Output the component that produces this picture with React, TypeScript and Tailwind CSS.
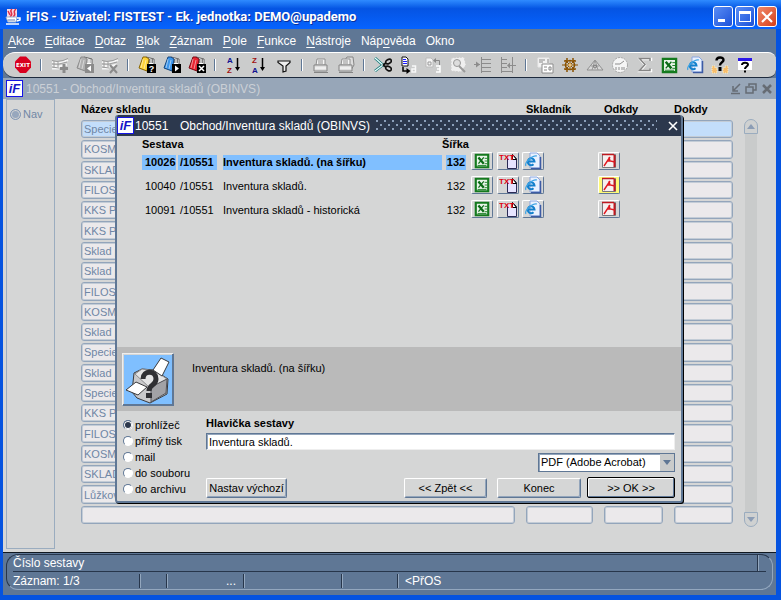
import type { ReactNode } from "react";

const FONT = "font-['Liberation_Sans',Arial,sans-serif]";

function Svg({ size = 18, children }: { size?: number; children: ReactNode }) {
  return (
    <svg width={size} height={size} viewBox="0 0 18 18" fill="none" aria-hidden="true" className="block shrink-0">
      {children}
    </svg>
  );
}

function ExitIcon() {
  return (
    <Svg>
      <path d="M6 0.5h6l5 5v6l-5 5.5H6l-5-5.500v-6z" fill="#d8001f" />
      <text x="9" y="11" textAnchor="middle" fontSize="5.500" fontWeight="700" fill="#fff" fontFamily="DejaVu Sans, sans-serif">EXIT</text>
    </Svg>
  );
}

function RecordIcon({ remove = false }: { remove?: boolean }) {
  return (
    <Svg>
      <path d="M1 6l5 1 6-1 5-2M1 9.500l7 1 8-2M1 12.500h7" stroke="#f6f6f6" strokeWidth="2" />
      <path d="M1 4.500l5 1 6-1 5-2M1 8h7l8-2M1 11l7 1M3 5v7M7 6v5" stroke="#9c9c9c" />
      {remove ? (
        <path d="M9 9l7 8M16 9l-7 8" stroke="#8b8b8b" strokeWidth="2" />
      ) : (
        <path d="M13 8v9M9 12.500h8" stroke="#8b8b8b" strokeWidth="3" />
      )}
    </Svg>
  );
}

function FolderIcon({ color, shade, badge, kind }: { color: string; shade: string; badge: string; kind: "ask" | "play" | "back" | "x" }) {
  return (
    <Svg>
      <path d="M8 1l8 2v10H6z" fill="#fff" stroke="#444" strokeWidth="0.800" />
      <path d="M11 4h5M11 6h5" stroke={badge} strokeDasharray="1.500 1" />
      <path d="M5 1h3l3 2-2 12-8-3z" fill={color} stroke={shade} />
      <path d="M5 3L3 12M8 4L6 13" stroke="#fff" strokeOpacity="0.500" />
      <rect x="9" y="8" width="9" height="9" fill={badge} />
      {kind === "ask" && (
        <text x="13.500" y="16" textAnchor="middle" fontSize="9" fontWeight="700" fill="#fff" fontFamily="Liberation Sans, sans-serif">?</text>
      )}
      {kind === "play" && <path d="M12 9.500l4 3-4 3z" fill="#fff" />}
      {kind === "back" && <path d="M15 9.500l-4 3 4 3z" fill="#fff" />}
      {kind === "x" && <path d="M11 10l5 5M16 10l-5 5" stroke="#fff" strokeWidth="1.500" />}
    </Svg>
  );
}

function SortIcon({ top, bottom, topColor, bottomColor }: { top: string; bottom: string; topColor: string; bottomColor: string }) {
  return (
    <Svg>
      <g fontSize="8" fontWeight="700" fontFamily="Liberation Sans, sans-serif">
        <text x="2" y="7" fill={topColor}>{top}</text>
        <text x="2" y="17" fill={bottomColor}>{bottom}</text>
      </g>
      <path d="M12.500 2v11" stroke="#000" strokeWidth="1.500" />
      <path d="M10 11h5l-2.500 4z" fill="#000" />
    </Svg>
  );
}

function FilterIcon() {
  return (
    <Svg>
      <path d="M3 5h12v1.500L11 10v5l-3 1v-6L3 6.500z" fill="#eee" stroke="#111" strokeWidth="1.200" />
    </Svg>
  );
}

function PrintIcon({ stacked = false }: { stacked?: boolean }) {
  return (
    <Svg>
      {stacked && <path d="M8 4l2-3h6l1 8-3 5" fill="#ddd" stroke="#858585" />}
      <path d="M5 3h8v6H4z" fill="#f5f5f5" stroke="#909090" />
      <path d="M6 5h5M6 7h5" stroke="#909090" />
      <path d="M2 9h13v6H2z" fill="#dedede" stroke="#858585" />
      <path d="M3 12h11" stroke="#fff" />
      <path d="M2 16.500h14" stroke="#858585" />
    </Svg>
  );
}

function ScissorsIcon() {
  return (
    <Svg>
      <path d="M1 2l9 8M1 15l9-7" stroke="#167878" strokeWidth="2.800" />
      <path d="M1 2l8 7M1 15l8-6" stroke="#e9ffff" strokeWidth="1.200" />
      <path d="M9 9l3-2M9 9l3 2" stroke="#111" strokeWidth="2" />
      <ellipse cx="14.500" cy="5.500" rx="3" ry="2" stroke="#111" strokeWidth="1.600" transform="rotate(-30 14.500 5.500)" />
      <ellipse cx="14.500" cy="12.500" rx="3" ry="2" stroke="#111" strokeWidth="1.600" transform="rotate(30 14.500 12.500)" />
    </Svg>
  );
}

function CopyIcon() {
  return (
    <Svg>
      <path d="M3 1h4l2 2v7H3z" fill="#fff" stroke="#111" />
      <path d="M4 3.500h3M4 5.500h4M4 7.500h4" stroke="#1a1aff" />
      <path d="M4 11v4h5" stroke="#000" strokeWidth="1.500" />
      <path d="M7.500 12l4 3-4 3z" fill="#000" />
      <path d="M13 10h3.500v6H13v-3h3" stroke="#f8f8f8" strokeWidth="1.500" />
    </Svg>
  );
}

function PasteIcon() {
  return (
    <Svg>
      <path d="M2 2h5l2 2v7H2z" fill="#f4f4f4" stroke="#bbb" />
      <path d="M4 6h3v3H4z" stroke="#999" />
      <path d="M12 10h4v6h-4M13 13h3" stroke="#fff" strokeWidth="1.500" />
      <path d="M15.500 9V4.500H11" stroke="#888" />
      <path d="M12 2L9 4.500 12 7z" fill="#888" />
    </Svg>
  );
}

function FindIcon() {
  return (
    <Svg>
      <path d="M2 2l13-1 2 8-5 7-10-1z" fill="#efefef" stroke="#ccc" strokeDasharray="2 1" />
      <circle cx="8" cy="7" r="3.500" fill="#ddd" stroke="#999" />
      <path d="M10 10l6 6" stroke="#999" strokeWidth="2" />
    </Svg>
  );
}

function InsertLinesIcon({ double = false }: { double?: boolean }) {
  return (
    <Svg>
      <path d={double ? "M2.500 1v16M13.500 1v16M3 3.500h5M3 7.500h5M3 11.500h5M3 15.500h10M9 9.500h8" : "M7.500 1v16M8 3.500h9M8 7.500h9M8 11.500h9M8 15.500h9M0 8.500h6"} stroke="#8c8c8c" />
      <path d={double ? "M11 6.500l-3 3 3 3z" : "M2 5.500l4 3-4 3z"} fill="#8c8c8c" />
    </Svg>
  );
}

function FormsIcon() {
  return (
    <Svg>
      <path d="M2 2h11v9H2z" fill="#f4f4f4" stroke="#e8e8e8" />
      <path d="M3 4h6M3 6h4M12 3v4" stroke="#888" />
      <path d="M6 8h11v9H6z" fill="#fff" stroke="#8c8c8c" />
      <path d="M8 11h3M8 14h3M13 11h2v3h-2z" stroke="#888" />
    </Svg>
  );
}

function WheelIcon() {
  return (
    <Svg>
      <circle cx="9" cy="9" r="4.500" stroke="#8a5200" strokeWidth="1.600" />
      <path d="M1 9h16M4 4l10 10M14 4L4 14M9 5v8" stroke="#8a5200" />
      <path d="M3 5h3V2M12 2v3h3M3 13h3v3M12 16v-3h3" stroke="#8a5200" strokeWidth="1.500" />
      <circle cx="9" cy="9" r="1.500" fill="#f4c46c" />
    </Svg>
  );
}

function PyramidIcon() {
  return (
    <Svg>
      <path d="M9 4L1 14h16z" fill="#dadada" stroke="#8f8f8f" />
      <path d="M9 4L6 14M9 4l3 10M5 10h8" stroke="#999" />
      <circle cx="9" cy="10.500" r="1.500" stroke="#777" />
    </Svg>
  );
}

function ClockIcon() {
  return (
    <Svg>
      <circle cx="9" cy="9" r="7.500" fill="#f5f5f5" stroke="#a5a5a5" strokeDasharray="2 1" />
      <path d="M4 8h5l4-3M5 11v3M8 11v3M11 11v3M13 11v3" stroke="#8d8d8d" />
    </Svg>
  );
}

function SumIcon() {
  return (
    <Svg>
      <path d="M15 5V3H4l5 6-5 6h11v-2" stroke="#fff" strokeWidth="2.500" />
      <path d="M14 5V2.500H3.500L9 8.500l-5.500 6H14v-2" stroke="#858585" strokeWidth="1.500" />
    </Svg>
  );
}

function ExcelIcon({ size = 17 }: { size?: number }) {
  return (
    <Svg size={size}>
      <path d="M2 2h14v14H2z" fill="#e9f5e9" stroke="#147a1e" strokeWidth="2.400" />
      <path d="M5 5l6 7" stroke="#0b6b16" strokeWidth="2.600" />
      <path d="M11 5l-6 7" stroke="#0b6b16" strokeWidth="1.400" />
      <path d="M12 6h3M12 9h3M12 12h3M4 14h10" stroke="#147a1e" />
    </Svg>
  );
}

function WebIcon() {
  return (
    <Svg>
      <path d="M6 1h7l3 3v12H6z" fill="#e9f1ff" stroke="#8ba7e0" />
      <path d="M16.500 5v11.500H7" stroke="#3d5ba5" strokeWidth="1.500" />
      <path d="M4 9.500h6.500a3.400 3.400 0 1 0-1 2.700" stroke="#1480cc" strokeWidth="2" />
      <path d="M2 14C0 11 8 3 13 4" stroke="#3fa4e4" strokeWidth="1.200" />
    </Svg>
  );
}

function PeopleHelpIcon() {
  return (
    <Svg>
      <path d="M1 10h3v2h2v5H1zM12 12h2v-2h3v7h-5z" fill="#f7bd6c" stroke="#fff1bd" strokeDasharray="1 1" />
      <path d="M5.500 4.500c0-4 7-4 7-.5 0 2.500-3.500 2-3.500 5.500" stroke="#000" strokeWidth="2.400" />
      <path d="M7.500 11h3v4h-3z" fill="#000" />
    </Svg>
  );
}

function WindowHelpIcon() {
  return (
    <Svg>
      <path d="M2 3h14v11H2z" fill="#fff" />
      <path d="M2 2h14v3H2z" fill="#2a16e8" />
      <path d="M6 9c0-3 6-3 6-.5 0 2-3 2-3 4.500" stroke="#000" strokeWidth="2" />
      <path d="M8 14.500h2v2H8z" fill="#000" />
    </Svg>
  );
}

function TextFileIcon() {
  return (
    <Svg>
      <path d="M8.500 6.500V16.500H17.500V6.500L14.500 3.500H13" fill="#e6e4ff" stroke="#2b2b55" />
      <path d="M13.500 2.500v5h4z" fill="#fff" stroke="#000" />
      <text x="0" y="8" fontSize="8" fontWeight="700" fill="#e00010" fontFamily="Liberation Sans, sans-serif">TXT</text>
    </Svg>
  );
}

function PdfIcon() {
  return (
    <Svg>
      <path d="M2.500 2.500h13v13h-13z" fill="#f6f0f0" stroke="#77767a" />
      <path d="M2 2.500h12" stroke="#c01820" strokeWidth="1.500" />
      <path d="M14.500 3v12" stroke="#c01820" strokeWidth="2" />
      <path d="M4 14l6-9M9 5l1 4 5 1M7 9l3 0" stroke="#e01820" strokeWidth="1.400" />
    </Svg>
  );
}

function JavaIcon() {
  return (
    <Svg>
      <path d="M3 1h10v8H3z" fill="#f7d9e4" />
      <path d="M8 1C4 4 11 5 6 9M12 1c-5 4 2 4-3 8M4 3l2 4" stroke="#e0304a" strokeWidth="1.500" />
      <path d="M2 9h11l-1 5H4z" fill="#fff" stroke="#9db0d0" />
      <path d="M13 10h3v2l-3 1M2 16h13" stroke="#fff" strokeWidth="1.500" />
      <path d="M4 12h7" stroke="#5a79b0" />
    </Svg>
  );
}

function PrinterArt() {
  return (
    <svg width="48" height="48" viewBox="0 0 48 48" fill="none" aria-hidden="true">
      <path d="M10 17l8-4 12 1 14 9-1 15-17 9-13-5-5-6z" fill="#c9c9cb" stroke="#3a3a3d" />
      <path d="M11 18l7-5 13 2 12 8-17 9z" fill="#e4e4e5" stroke="#8a8a8d" />
      <path d="M27 31l16-8-1 14-15 9z" fill="#a2a2a6" stroke="#55555a" />
      <path d="M29 14l8-12 8 4-7 14z" fill="#fff" stroke="#3a3a3d" />
      <path d="M2 34l10-8 11 5-9 8z" fill="#fff" stroke="#3a3a3d" />
      <path d="M19 23c0-9 13-9 13 0 0 7-7 5-7 12" stroke="#303034" strokeWidth="5" />
      <path d="M22 37h6v5h-6z" fill="#303034" />
    </svg>
  );
}

function Logo() {
  return (
    <span className="flex h-[17px] w-[17px] shrink-0 items-center justify-center border border-[#1414e6] bg-white text-[13px] leading-none font-bold text-[#1414c8] italic">
      iF
    </span>
  );
}

const toolGroups: { label: string; icon: ReactNode }[][] = [
  [{ label: "Exit", icon: <ExitIcon /> }],
  [
    { label: "Vložit záznam", icon: <RecordIcon /> },
    { label: "Duplikovat záznam", icon: <FolderIcon color="#b0b0b0" shade="#8c8c8c" badge="#8b8b8b" kind="back" /> },
    { label: "Smazat záznam", icon: <RecordIcon remove /> },
  ],
  [
    { label: "Zadat dotaz", icon: <FolderIcon color="#ffd43a" shade="#8a6500" badge="#000" kind="ask" /> },
    { label: "Provést dotaz", icon: <FolderIcon color="#3d95ea" shade="#124680" badge="#000" kind="play" /> },
    { label: "Zrušit dotaz", icon: <FolderIcon color="#e82632" shade="#7a0812" badge="#000" kind="x" /> },
  ],
  [
    { label: "Seřadit vzestupně", icon: <SortIcon top="A" bottom="Z" topColor="#101090" bottomColor="#a01010" /> },
    { label: "Seřadit sestupně", icon: <SortIcon top="Z" bottom="A" topColor="#a01010" bottomColor="#101090" /> },
    { label: "Filtr", icon: <FilterIcon /> },
  ],
  [
    { label: "Tisk", icon: <PrintIcon /> },
    { label: "Tisk sestav", icon: <PrintIcon stacked /> },
  ],
  [
    { label: "Vyjmout", icon: <ScissorsIcon /> },
    { label: "Kopírovat", icon: <CopyIcon /> },
    { label: "Vložit", icon: <PasteIcon /> },
    { label: "Hledat", icon: <FindIcon /> },
    { label: "Vložit řádek", icon: <InsertLinesIcon /> },
    { label: "Vložit řádky", icon: <InsertLinesIcon double /> },
  ],
  [
    { label: "Formuláře", icon: <FormsIcon /> },
    { label: "Navigátor", icon: <WheelIcon /> },
    { label: "Pyramida", icon: <PyramidIcon /> },
    { label: "Čas", icon: <ClockIcon /> },
    { label: "Součet", icon: <SumIcon /> },
    { label: "Excel", icon: <ExcelIcon /> },
    { label: "Web", icon: <WebIcon /> },
    { label: "Podpora", icon: <PeopleHelpIcon /> },
    { label: "Nápověda", icon: <WindowHelpIcon /> },
  ],
];

const menus: [string, string, string][] = [
  ["", "A", "kce"],
  ["", "E", "ditace"],
  ["", "D", "otaz"],
  ["", "B", "lok"],
  ["", "Z", "áznam"],
  ["", "P", "ole"],
  ["", "F", "unkce"],
  ["", "N", "ástroje"],
  ["Náp", "o", "věda"],
  ["Okno", "", ""],
];

const stores = [
  "Speciení", "KOSMETIKA", "SKLAD", "FILOSOFIE", "KKS Praha", "KKS Plzeň", "Sklad p", "Sklad p", "FILOSOFIE", "KOSMETIKA",
  "Sklad p", "Speciení", "Sklad p", "Speciení", "KKS P", "FILOSOFIE", "KOSMETIKA", "SKLAD", "Lůžkoviny", "",
];

const reports = [
  { code: "10026", task: "/10551", name: "Inventura skladů. (na šířku)", width: "132", pdf: false },
  { code: "10040", task: "/10551", name: "Inventura skladů.", width: "132", pdf: true },
  { code: "10091", task: "/10551", name: "Inventura skladů - historická", width: "132", pdf: false },
];

const outputs = ["prohlížeč", "přímý tisk", "mail", "do souboru", "do archivu"];

function TitleBar() {
  return (
    <header className="flex h-[29px] shrink-0 items-center gap-1 bg-linear-to-b from-[#2f8bff] via-[#0554e3] via-30% to-[#0663ff] px-1 pt-1">
      <JavaIcon />
      <h1 className="flex-1 truncate font-['Roboto','Noto_Sans',sans-serif] text-[13px] leading-4 font-bold text-white [text-shadow:1px_1px_#0a2f9a]">
        iFIS - Uživatel: FISTEST - Ek. jednotka: DEMO@upademo
      </h1>
      <div className="flex gap-[2px]">
        <button type="button" aria-label="Minimalizovat" className="flex h-[21px] w-5 items-end rounded-[3px] border border-white bg-linear-to-br from-[#5a8df5] to-[#1c4fd8] p-1">
          <span className="h-[3px] w-[7px] bg-white" />
        </button>
        <button type="button" aria-label="Maximalizovat" className="flex h-[21px] w-5 items-center justify-center rounded-[3px] border border-white bg-linear-to-br from-[#5a8df5] to-[#1c4fd8]">
          <span className="h-[11px] w-3 border border-t-[3px] border-white" />
        </button>
        <button type="button" aria-label="Zavřít" className="flex h-[21px] w-5 items-center justify-center rounded-[3px] border border-white bg-linear-to-br from-[#f08868] to-[#d63c14]">
          <svg width="12" height="12" viewBox="0 0 12 12" aria-hidden="true">
            <path d="M1 1l10 10M11 1L1 11" stroke="#fff" strokeWidth="2.200" />
          </svg>
        </button>
      </div>
    </header>
  );
}

function Toolbar() {
  return (
    <div role="toolbar" aria-label="Nástroje" className="flex h-[26px] shrink-0 items-center rounded-r-lg rounded-l-xl border-t border-b border-t-white border-b-[#1d2a3d] bg-[#cbcccc] pl-[7px]">
      {toolGroups.map((group, i) => (
        <div key={i} className="flex items-center">
          {i > 0 && (
            <span className="flex w-3 justify-center">
              <span className="h-3 w-[2px] border-r border-white bg-[#5f7795]" />
            </span>
          )}
          {group.map((tool) => (
            <button key={tool.label} type="button" aria-label={tool.label} className="flex h-6 w-[25px] items-center justify-center">
              {tool.icon}
            </button>
          ))}
        </div>
      ))}
    </div>
  );
}

function StoreField({ value, label, active, className }: { value: string; label: string; active: boolean; className: string }) {
  return (
    <input
      readOnly
      aria-label={label}
      value={value}
      className={`${className} h-full min-w-0 rounded-[3px] border border-[#93a5bb] px-[2px] text-[11px] text-[#6f86a5] shadow-[inset_0_0_0_1px_#c3ccd6] outline-none ${active ? "bg-[#c3defb]" : "bg-[#ebe9eb]"}`}
    />
  );
}

function StoreForm() {
  return (
    <main className="flex min-h-0 flex-1 bg-[#d5d6d6] pb-[3px] pl-[3px]">
      <nav className="w-[49px] shrink-0 border border-[#9aacbf] pt-[6px] pl-[3px]">
        <label className="flex items-center gap-[2px] text-[11px] text-[#7287a5]">
          <input type="radio" name="nav" className="h-[11px] w-[11px] appearance-none rounded-full border border-[#8398b5] bg-[#97a7bd] shadow-[inset_0_0_0_1px_#d5d6d6]" />
          Nav
        </label>
      </nav>
      <div className="flex min-w-0 flex-1 flex-col pt-[3px] pr-[43px] pb-6 pl-[26px]">
        <div className="flex h-[17px] shrink-0 gap-[11px] text-[11px] leading-[14px] font-bold text-black">
          <span className="flex-1">Název skladu</span>
          <span className="w-[67px]">Skladník</span>
          <span className="w-[59px]">Odkdy</span>
          <span className="w-[59px]">Dokdy</span>
        </div>
        <div className="grid flex-1 auto-rows-fr">
          {stores.map((store, i) => (
            <div key={i} className="flex min-h-0 gap-[11px] py-px">
              <StoreField value={store} label="Název skladu" active={i === 0} className="flex-1" />
              <StoreField value="" label="Skladník" active={i === 0} className="w-[67px]" />
              <StoreField value="" label="Odkdy" active={i === 0} className="w-[59px]" />
              <StoreField value="" label="Dokdy" active={i === 0} className="w-[59px]" />
            </div>
          ))}
        </div>
      </div>
      <div className="-ml-8 mt-5 mr-[18px] mb-[22px] flex w-[14px] shrink-0 flex-col">
        <button type="button" aria-label="Nahoru" className="flex h-[15px] items-center justify-center rounded-t-full border border-[#9aacbf] bg-[#cfd1d1]">
          <svg width="8" height="5" viewBox="0 0 8 5" aria-hidden="true"><path d="M4 0l4 5H0z" fill="#8c9db5" /></svg>
        </button>
        <span className="mx-px flex-1 bg-[#c9cbcb]" />
        <button type="button" aria-label="Dolů" className="flex h-[15px] items-center justify-center rounded-b-full border border-[#9aacbf] bg-[#cfd1d1]">
          <svg width="8" height="5" viewBox="0 0 8 5" aria-hidden="true"><path d="M4 5L0 0h8z" fill="#8c9db5" /></svg>
        </button>
      </div>
    </main>
  );
}

function ReportButton({ label, yellow = false, children }: { label: string; yellow?: boolean; children: ReactNode }) {
  return (
    <button
      type="button"
      aria-label={label}
      className={`flex h-[18px] w-[22px] items-center justify-center rounded-[2px] border border-t-white border-r-[#5f7795] border-b-[#5f7795] border-l-white ${yellow ? "bg-[#fffa78]" : "bg-[#d5d6d6]"}`}
    >
      {children}
    </button>
  );
}

function ReportTable() {
  return (
    <table className="ml-[25px] w-[480px] table-fixed border-collapse text-[11px] leading-[15px] text-black">
      <colgroup>
        <col className="w-9" />
        <col className="w-[45px]" />
        <col className="w-[223px]" />
        <col className="w-[25px]" />
        <col className="w-[26px]" />
        <col className="w-[25px]" />
        <col className="w-[76px]" />
        <col className="w-6" />
      </colgroup>
      <thead>
        <tr className="h-[15px] text-left">
          <th colSpan={3} className="p-0 pt-px">Sestava</th>
          <th colSpan={5} className="p-0 pt-px">
            <span className="-ml-1">Šířka</span>
          </th>
        </tr>
      </thead>
      <tbody>
        {reports.map((r, i) => {
          const tone = i === 0 ? "bg-[#80bfff] font-bold" : "";
          return (
            <tr key={r.code} className="h-[24px] align-top">
              <td className="p-0 pt-[3px]"><div className={`mr-[2px] h-[15px] pl-[3px] ${tone}`}>{r.code}</div></td>
              <td className="p-0 pt-[3px]"><div className={`mr-[6px] h-[15px] pl-[2px] ${tone}`}>{r.task}</div></td>
              <td className="p-0 pt-[3px]"><div className={`mr-1 h-[15px] ${tone}`}>{r.name}</div></td>
              <td className="p-0 pt-[3px]"><div className={`mr-[5px] h-[15px] text-center ${tone}`}>{r.width}</div></td>
              <td className="p-0"><ReportButton label="Excel"><ExcelIcon size={16} /></ReportButton></td>
              <td className="p-0"><ReportButton label="Text"><TextFileIcon /></ReportButton></td>
              <td className="p-0"><ReportButton label="HTML"><WebIcon /></ReportButton></td>
              <td className="p-0"><ReportButton label="PDF" yellow={r.pdf}><PdfIcon /></ReportButton></td>
            </tr>
          );
        })}
      </tbody>
    </table>
  );
}

const raised = "h-5 rounded-[2px] border border-t-white border-r-[#5f7795] border-b-[#5f7795] border-l-white bg-[#d5d6d6] text-[11px] leading-[14px] text-black shadow-[inset_-1px_-1px_#93a5bb]";

function ReportDialog() {
  return (
    <section
      role="dialog"
      aria-label="Obchod/Inventura skladů"
      className="absolute top-[115px] left-[115px] flex h-[388px] w-[568px] flex-col overflow-hidden rounded-[3px] border-x-2 border-b-2 border-[#5f7795] bg-[#d5d6d6] shadow-[1px_1px_#000]"
    >
      <div className="flex h-[21px] shrink-0 items-center bg-[#2c384d] text-[12px] text-white">
        <Logo />
        <span className="w-[46px] pl-px">10551</span>
        <span>Obchod/Inventura skladů (OBINVS)</span>
        <span className="ml-[6px] mr-2 h-3 flex-1 bg-[radial-gradient(circle_at_1px_1px,#8b9fba_1px,transparent_1px),radial-gradient(circle_at_5px_5px,#8b9fba_1px,transparent_1px)] bg-size-[8px_8px]" />
        <button type="button" aria-label="Zavřít okno" className="flex h-4 w-4 items-center justify-center">
          <svg width="10" height="10" viewBox="0 0 10 10" aria-hidden="true">
            <path d="M1 1l8 8M9 1L1 9" stroke="#fff" strokeWidth="1.600" />
          </svg>
        </button>
      </div>
      <div className="min-h-0 flex-1">
        <ReportTable />
      </div>
      <div className="flex h-16 shrink-0 gap-[18px] bg-[#bababa] px-[5px] pt-[6px]">
        <button type="button" aria-label="Tiskárna" className="flex h-[53px] w-[52px] items-center justify-center border border-t-[#eee] border-r-[#5f7795] border-b-[#5f7795] border-l-[#eee] bg-[#7fbfff] shadow-[inset_-1px_-1px_#5f7795,inset_1px_1px_#d5d6d6]">
          <PrinterArt />
        </button>
        <p className="pt-2 text-[11px] leading-[14px] text-black">Inventura skladů. (na šířku)</p>
      </div>
      <div className="flex h-[90px] shrink-0 pr-[6px] pl-[6px] text-[11px] text-black">
        <fieldset className="flex w-[83px] shrink-0 flex-col pt-[6px]">
          {outputs.map((o, i) => (
            <label key={o} className="flex h-4 items-center gap-[2px] leading-4">
              <input
                type="radio"
                name="output"
                defaultChecked={i === 0}
                className="h-[10px] w-[10px] appearance-none rounded-full border border-t-[#5f7795] border-r-white border-b-white border-l-[#5f7795] bg-white checked:bg-[#2c384d] checked:shadow-[inset_0_0_0_1px_#fff]"
              />
              {o}
            </label>
          ))}
        </fieldset>
        <div className="flex min-w-0 flex-1 flex-col pt-[5px]">
          <label htmlFor="heading" className="h-[17px] leading-[14px] font-bold">Hlavička sestavy</label>
          <input
            id="heading"
            defaultValue="Inventura skladů."
            className="h-[17px] w-full shrink-0 border border-t-[#5f7795] border-r-[#eee] border-b-[#eee] border-l-[#5f7795] bg-white px-[2px] text-[11px] shadow-[inset_1px_1px_#93a5bb] outline-none"
          />
          <div className="relative mt-[3px] w-[137px] self-end">
            <select aria-label="Formát" className="h-[19px] w-full appearance-none border border-[#5f7795] bg-white px-[2px] text-[11px] text-black shadow-[inset_1px_1px_#93a5bb] outline-none">
              <option>PDF (Adobe Acrobat)</option>
            </select>
            <span className="pointer-events-none absolute top-px right-px flex h-[17px] w-[14px] items-center justify-center bg-[#c9cbcb]">
              <svg width="8" height="5" viewBox="0 0 8 5" aria-hidden="true"><path d="M4 5L0 0h8z" fill="#5f7795" /></svg>
            </span>
          </div>
          <div className="mt-[5px] flex items-center">
            <button type="button" className={`${raised} w-[81px]`}>Nastav výchozí</button>
            <span className="flex-1" />
            <button type="button" className={`${raised} mr-[10px] w-[83px]`}>&lt;&lt; Zpět &lt;&lt;</button>
            <button type="button" className={`${raised} mr-[6px] w-[84px]`}>Konec</button>
            <button type="button" className="h-[21px] w-[88px] rounded-[2px] border border-black bg-[#d5d6d6] text-[11px] leading-[14px] shadow-[inset_-1px_-1px_#5f7795,inset_1px_1px_#fff]">&gt;&gt; OK &gt;&gt;</button>
          </div>
        </div>
      </div>
    </section>
  );
}

const cell = "border-r border-[#27364b] shadow-[1px_0_#93a7be]";

function StatusBar() {
  return (
    <footer className="h-[43px] shrink-0 border-t border-[#101820] bg-[#5f7795] px-[3px] pt-px text-[12px] text-white">
      <div className="h-9 rounded-xl border border-t-[#27364b] border-r-[#93a7be] border-b-[#93a7be] border-l-[#27364b] px-[6px]">
        <div className="flex h-[17px] border-b border-[#27364b] leading-4">
          <span className="flex-1">Číslo sestavy</span>
          <span className="mr-[7px] w-[2px] border-r border-[#93a7be] bg-[#27364b]" />
        </div>
        <div className="flex h-4 items-stretch pt-[2px] leading-[14px]">
          <span className={`${cell} w-[127px]`}>Záznam: 1/3</span>
          <span className={`${cell} w-[27px]`} />
          <span className={`${cell} w-[77px] pr-[7px] text-right`}>...</span>
          <span className={`${cell} w-[98px]`} />
          <span className={`${cell} w-14`} />
          <span className="pl-[7px]">&lt;PřOS</span>
        </div>
      </div>
    </footer>
  );
}

export default function App() {
  return (
    <div className={`${FONT} relative flex h-screen w-full flex-col overflow-hidden bg-[#0553e0]`}>
      <TitleBar />
      <div className="mr-[5px] mb-[5px] ml-[3px] flex min-h-0 flex-1 flex-col bg-[#5f7795]">
        <nav className="flex h-[23px] shrink-0 items-center gap-[10px] pl-[5px] text-[12px] text-white">
          {menus.map(([a, b, c]) => (
            <button key={a + b + c} type="button">
              {a}
              <span className="underline underline-offset-2">{b}</span>
              {c}
            </button>
          ))}
        </nav>
        <Toolbar />
        <div className="flex h-[21px] shrink-0 items-center bg-[#97a6b8] pl-[3px] text-[12px] text-[#cbd0d6]">
          <Logo />
          <span className="flex-1 pl-[3px]">10551 - Obchod/Inventura skladů (OBINVS)</span>
          <svg width="44" height="12" viewBox="0 0 44 12" fill="none" aria-hidden="true" className="mr-[3px]">
            <path d="M11 1L5 7M4 3v5h5M2 10.500h9" stroke="#666c74" strokeWidth="1.500" />
            <path d="M20 3V1h7v6h-3M17 4h7v6h-7z" stroke="#666c74" strokeWidth="1.500" />
            <path d="M34 2l8 8M42 2l-8 8" stroke="#666c74" strokeWidth="2.500" />
          </svg>
        </div>
        <StoreForm />
        <StatusBar />
      </div>
      <ReportDialog />
    </div>
  );
}
